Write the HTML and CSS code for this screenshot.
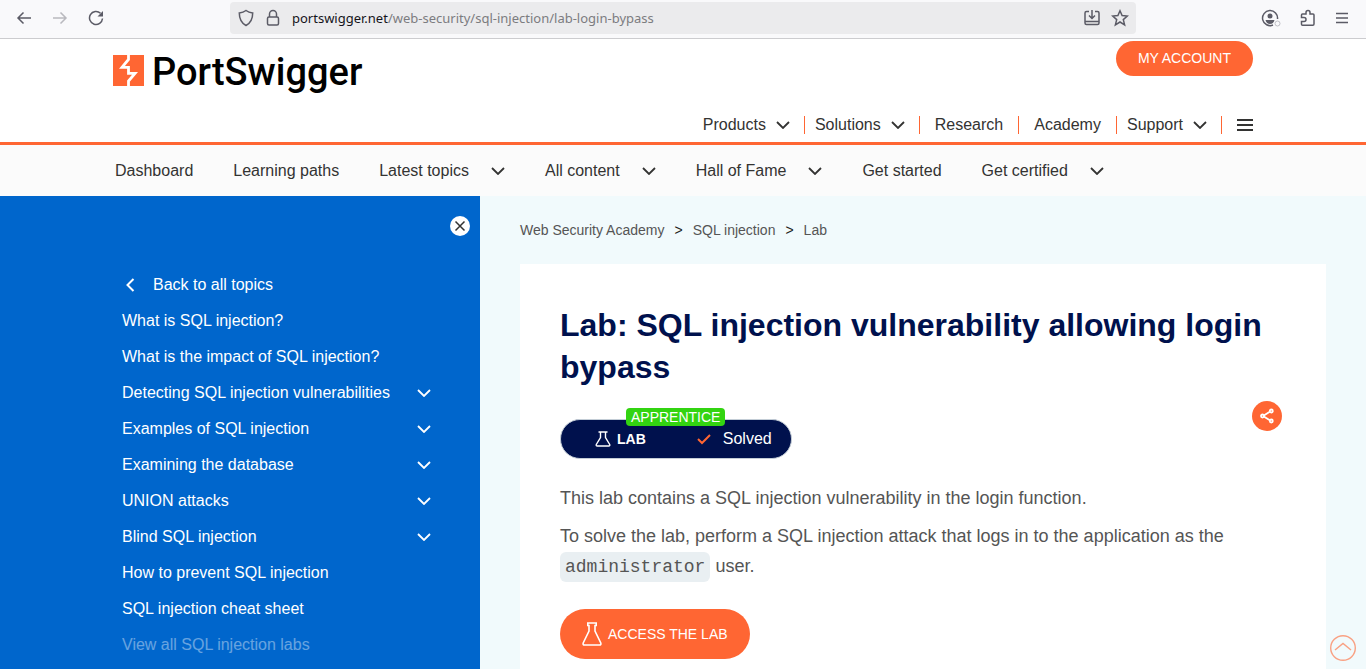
FILE: index.html
```html
<!DOCTYPE html>
<html lang="en">
<head>
<meta charset="utf-8">
<meta name="viewport" content="width=device-width, initial-scale=1">
<title>Lab: SQL injection vulnerability allowing login bypass</title>
<link rel="stylesheet" href="styles.css">
</head>
<body>
<svg class="defs" aria-hidden="true">
  <symbol id="chev" viewBox="0 0 14 8"><path d="M1 1l6 6 6-6" fill="none" stroke="currentColor" stroke-width="1.8"/></symbol>
</svg>

<div class="browser">
  <div class="browser-nav">
    <button aria-label="Back"><svg width="16" height="16" viewBox="0 0 16 16"><path d="M15 8H2M7.500 2.500L2 8l5.500 5.500"/></svg></button>
    <button class="disabled" aria-label="Forward" disabled><svg width="16" height="16" viewBox="0 0 16 16"><path d="M1 8h13M8.500 2.500L14 8l-5.500 5.500"/></svg></button>
    <button aria-label="Reload"><svg width="16" height="16" viewBox="0 0 16 16"><path d="M14.500 8.500A6.500 6.500 0 1 1 12.500 3.300"/><path class="solid" d="M15 1v5.500H9.500z"/></svg></button>
  </div>
  <div class="address">
    <svg width="16" height="18" viewBox="0 0 16 18"><path d="M8 1.500c2 1.500 4.300 2.200 6.700 2.500 0 6-2 10-6.700 12.500C3.300 14 1.300 10 1.300 4 3.700 3.700 6 3 8 1.500z"/></svg>
    <svg width="14" height="18" viewBox="0 0 14 18"><rect x="1.500" y="8" width="11" height="8" rx="1.500"/><path d="M3.500 8V5a3.500 3.500 0 0 1 7 0v3"/></svg>
    <div class="url" role="textbox" aria-label="Address"><span class="host">portswigger.net</span>/web-security/sql-injection/lab-login-bypass</div>
    <button aria-label="Install"><svg width="18" height="18" viewBox="0 0 18 18"><path d="M6 2.500H3.500q-1.500 0-1.500 1.500v10q0 1.500 1.500 1.500h11q1.500 0 1.500-1.500V4q0-1.500-1.500-1.500H12M2 12.500h14M9 1v8M6 6.500L9 9.500l3-3"/></svg></button>
    <button aria-label="Bookmark"><svg width="18" height="18" viewBox="0 0 18 18"><path d="M9 1.800l2.100 4.800 5.200.5-4 3.500 1.300 5.200L9 13l-4.600 2.800 1.300-5.200-4-3.500 5.200-.5z"/></svg></button>
  </div>
  <div class="browser-tools">
    <button aria-label="Account"><svg width="20" height="18" viewBox="0 0 20 18"><path d="M12 16A7.500 7.500 0 1 1 16.500 10"/><circle class="solid" cx="9" cy="7" r="2.500"/><path class="solid" d="M4.500 11h9q-1 4-4.500 4t-4.500-4z"/><circle class="faint" cx="16.500" cy="14.500" r="2.500"/></svg></button>
    <button aria-label="Extensions"><svg width="18" height="18" viewBox="0 0 18 18"><path d="M3.500 16.300h10.300q1.200 0 1.200-1.200V6q0-1-1-1H11V3.500a2 2 0 0 0-4 0V5H3.500q-1 0-1 1v2.500H5a1.900 1.900 0 0 1 0 4H2.500V15.300q0 1 1 1z"/></svg></button>
    <button aria-label="Menu"><svg width="14" height="14" viewBox="0 0 14 14"><path d="M1 2.500h12M1 7h12M1 11.500h12"/></svg></button>
  </div>
</div>

<header class="site-header">
  <div class="container">
    <div class="header-top">
      <a class="logo" href="#" aria-label="PortSwigger">
        <svg width="31" height="31" viewBox="0 0 31 31"><path fill="#ff6633" d="M0 0h31v31H0z"/><path fill="none" stroke="#fff" stroke-width="2.800" d="M15.500 0v4.500L9 12.300h6.500v6H22l-6.500 7.700v5"/></svg>
        <span>PortSwigger</span>
      </a>
      <a class="account" href="#">MY ACCOUNT</a>
    </div>
    <nav class="main-nav" aria-label="Main">
      <button>Products <svg width="14" height="8"><use href="#chev"/></svg></button>
      <button>Solutions <svg width="14" height="8"><use href="#chev"/></svg></button>
      <a href="#">Research</a>
      <a href="#">Academy</a>
      <button>Support <svg width="14" height="8"><use href="#chev"/></svg></button>
      <button class="burger" aria-label="All menus"><svg width="16" height="12" viewBox="0 0 16 12"><path d="M0 1h16M0 6h16M0 11h16" stroke="currentColor" stroke-width="2"/></svg></button>
    </nav>
  </div>
</header>

<nav class="sub-nav" aria-label="Academy">
  <div class="container">
    <a href="#">Dashboard</a>
    <a href="#">Learning paths</a>
    <button>Latest topics <svg width="14" height="8"><use href="#chev"/></svg></button>
    <button>All content <svg width="14" height="8"><use href="#chev"/></svg></button>
    <button>Hall of Fame <svg width="14" height="8"><use href="#chev"/></svg></button>
    <a href="#">Get started</a>
    <button>Get certified <svg width="14" height="8"><use href="#chev"/></svg></button>
  </div>
</nav>

<div class="page">
  <aside class="sidebar">
    <button class="close" aria-label="Close menu"><svg width="12" height="12" viewBox="0 0 12 12"><path d="M1.500 1.500l9 9M10.500 1.500l-9 9" stroke="currentColor" stroke-width="1.500"/></svg></button>
    <ul class="topics">
      <li><a class="back" href="#"><svg width="9" height="14" viewBox="0 0 9 14"><path d="M7.500 1L1.500 7l6 6" fill="none" stroke="currentColor" stroke-width="2"/></svg>Back to all topics</a></li>
      <li><a href="#">What is SQL injection?</a></li>
      <li><a href="#">What is the impact of SQL injection?</a></li>
      <li><button>Detecting SQL injection vulnerabilities <svg width="14" height="8"><use href="#chev"/></svg></button></li>
      <li><button>Examples of SQL injection <svg width="14" height="8"><use href="#chev"/></svg></button></li>
      <li><button>Examining the database <svg width="14" height="8"><use href="#chev"/></svg></button></li>
      <li><button>UNION attacks <svg width="14" height="8"><use href="#chev"/></svg></button></li>
      <li><button>Blind SQL injection <svg width="14" height="8"><use href="#chev"/></svg></button></li>
      <li><a href="#">How to prevent SQL injection</a></li>
      <li><a href="#">SQL injection cheat sheet</a></li>
      <li class="fading"><a href="#">View all SQL injection labs</a></li>
    </ul>
  </aside>

  <main class="content">
    <nav class="crumbs" aria-label="Breadcrumb">
      <a href="#">Web Security Academy</a><span>&gt;</span><a href="#">SQL injection</a><span>&gt;</span><a href="#">Lab</a>
    </nav>
    <article class="card">
      <h1>Lab: SQL injection vulnerability allowing login bypass</h1>
      <div class="meta">
        <div class="status">
          <span class="level">APPRENTICE</span>
          <svg width="16" height="16" viewBox="0 0 16 16"><path d="M3.500 1h9M5.500 1v5.500L1.300 13.500Q.8 15 2.300 15h11.400q1.500 0 1-1.500L10.500 6.500V1" fill="none" stroke="currentColor" stroke-width="1.400"/></svg>
          <strong>LAB</strong>
          <svg class="tick" width="14" height="12" viewBox="0 0 14 12"><path d="M1 6l4 4 8-8" fill="none" stroke="currentColor" stroke-width="2"/></svg>
          <span>Solved</span>
        </div>
        <button class="share" aria-label="Share"><svg width="16" height="16" viewBox="0 0 16 16"><path d="M12 3L4 8l8 5" fill="none" stroke="currentColor" stroke-width="1.800"/><g fill="#ff6633" stroke="currentColor" stroke-width="1.800"><circle cx="12.300" cy="3" r="1.500"/><circle cx="3.500" cy="8" r="1.500"/><circle cx="12.300" cy="13" r="1.500"/></g></svg></button>
      </div>
      <p>This lab contains a SQL injection vulnerability in the login function.</p>
      <p>To solve the lab, perform a SQL injection attack that logs in to the application as the <code>administrator</code> user.</p>
      <a class="access" href="#"><svg width="20" height="24" viewBox="0 0 20 24"><path d="M5.800 1h8.400v2.500H13V9l5.800 12q.6 2-1.300 2h-15q-1.900 0-1.300-2L7 9V3.500H5.800z" fill="none" stroke="currentColor" stroke-width="1.600"/></svg>ACCESS THE LAB</a>
    </article>
  </main>
</div>

<a class="to-top" href="#" aria-label="Back to top"><svg width="26" height="26" viewBox="0 0 26 26"><circle cx="13" cy="13" r="12.300"/><path d="M5 15l8-6.500 8 6.500"/></svg></a>
</body>
</html>
```
FILE: styles.css
```css
* { box-sizing: border-box; }

body {
  margin: 0;
  min-height: 100vh;
  display: flex;
  flex-direction: column;
  font: 16px/20px "Liberation Sans", Arial, sans-serif;
  color: #333332;
  background: #fff;
}

a { color: inherit; text-decoration: none; }

button {
  display: flex;
  align-items: center;
  padding: 0;
  border: 0;
  background: none;
  color: inherit;
  font: inherit;
  text-align: left;
}

svg { flex: none; }
.defs { position: absolute; width: 0; height: 0; }

.browser {
  display: grid;
  grid-template-columns: 230px 1fr 230px;
  align-items: center;
  height: 39px;
  padding-bottom: 2px;
  background: #f9f9fb;
  border-bottom: 1px solid #cccccf;
}
.browser svg { fill: none; stroke: #5b5b66; stroke-width: 1.5; }
.browser .solid { fill: #5b5b66; stroke: none; }
.browser .faint { stroke: #bfbfc6; stroke-width: 1; }
.browser-nav { display: flex; gap: 20px; padding-left: 16px; }
.browser .disabled { opacity: 0.4; }
.address {
  display: flex;
  align-items: center;
  gap: 12px;
  height: 32px;
  padding: 0 7px 0 8px;
  border-radius: 4px;
  background: #ebebed;
}
.address button:last-child { margin-left: -2px; }
.url {
  flex: 1;
  font: 13px/20px "Noto Sans", "Open Sans", sans-serif;
  color: #7c7c80;
}
.host { color: #15141a; }
.browser-tools {
  display: flex;
  justify-content: flex-end;
  align-items: center;
  gap: 18px;
  padding-right: 17px;
}

.container { width: 100%; max-width: 1140px; margin: 0 auto; }

.site-header { border-bottom: 3px solid #ff6633; }
.header-top {
  display: flex;
  justify-content: space-between;
  align-items: flex-start;
  padding-top: 2px;
}
.logo {
  display: flex;
  align-items: flex-start;
  gap: 8px;
  padding-top: 14px;
  font: 500 38px/34px Roboto, sans-serif;
  color: #000;
}
.account {
  padding: 0 22px;
  border-radius: 18px;
  background: #ff6633;
  color: #fff;
  font-size: 14px;
  line-height: 35px;
}
.main-nav {
  display: flex;
  justify-content: flex-end;
  align-items: center;
  padding: 27px 0 8px;
}
.main-nav > * {
  padding: 0 15px;
  line-height: 18px;
  border-left: 1px solid #ff6633;
}
.main-nav > button { gap: 10px; height: 18px; padding: 0 14px 0 10px; }
.main-nav > :first-child { border-left: 0; }
.main-nav > .burger { padding: 0 0 0 15px; }

.sub-nav { background: #fbfbfb; }
.sub-nav .container {
  display: flex;
  align-items: center;
  gap: 40px;
  height: 51px;
  padding-left: 2px;
}
.sub-nav button { gap: 22px; }

.page {
  flex: 1;
  display: grid;
  grid-template-columns: 480px 1fr;
  background: #f1fafc;
}

.sidebar { background: #0066cc; color: #fff; padding: 20px 10px 0 0; }
.close {
  justify-content: center;
  width: 20px;
  height: 20px;
  margin-left: auto;
  border-radius: 50%;
  background: #fff;
  color: #333332;
}
.topics { list-style: none; margin: 31px 39px 0 0; padding: 0 0 0 122px; }
.topics li > * {
  display: flex;
  align-items: center;
  justify-content: space-between;
  width: 100%;
  height: 36px;
}
.topics li > .back { justify-content: flex-start; gap: 18px; padding-left: 4px; }
.fading { opacity: 0.4; }

.content { display: flex; flex-direction: column; padding: 24px 40px 0; }
.crumbs { display: flex; gap: 10px; font-size: 14px; color: #555; }
.crumbs span { color: #222; }

.card {
  flex: 1;
  margin-top: 24px;
  padding: 40px 40px 10px;
  background: #fff;
  color: #555;
  font-size: 18px;
  line-height: 30px;
}
h1 { margin: 0 0 13px; font-size: 32px; line-height: 42px; color: #00114d; }
.meta {
  display: flex;
  justify-content: space-between;
  align-items: flex-start;
  margin-bottom: 24px;
  padding-right: 4px;
}
.status {
  position: relative;
  display: flex;
  align-items: center;
  height: 40px;
  margin-top: 18px;
  padding: 0 19px 0 34px;
  border: 1px solid #c3cdd6;
  border-radius: 20px;
  background: #00114d;
  color: #fff;
  font-size: 16px;
}
.status strong { margin: 0 51px 0 6px; font-size: 14px; }
.tick { margin-right: 12px; color: #ff6633; }
.level {
  position: absolute;
  top: -12px;
  left: 65px;
  padding: 0 5px;
  border-radius: 4px;
  background: #33d411;
  font-size: 14px;
  line-height: 18px;
}
.share {
  justify-content: center;
  width: 30px;
  height: 30px;
  border-radius: 50%;
  background: #ff6633;
  color: #fff;
}
.card p { margin: 0 0 8px; }
code {
  display: inline-block;
  padding: 0 5px;
  border-radius: 6px;
  background: #e9eff2;
  font: 18px/30px "Liberation Mono", monospace;
}
.access {
  display: inline-flex;
  align-items: center;
  gap: 6px;
  height: 50px;
  margin-top: 19px;
  padding: 0 22px;
  border-radius: 25px;
  background: #ff6633;
  color: #fff;
  font-size: 14px;
}

.to-top { position: fixed; right: 10px; bottom: 8px; height: 26px; opacity: 0.6; }
.to-top svg { fill: none; stroke: #ff6633; stroke-width: 1.4; }
```
